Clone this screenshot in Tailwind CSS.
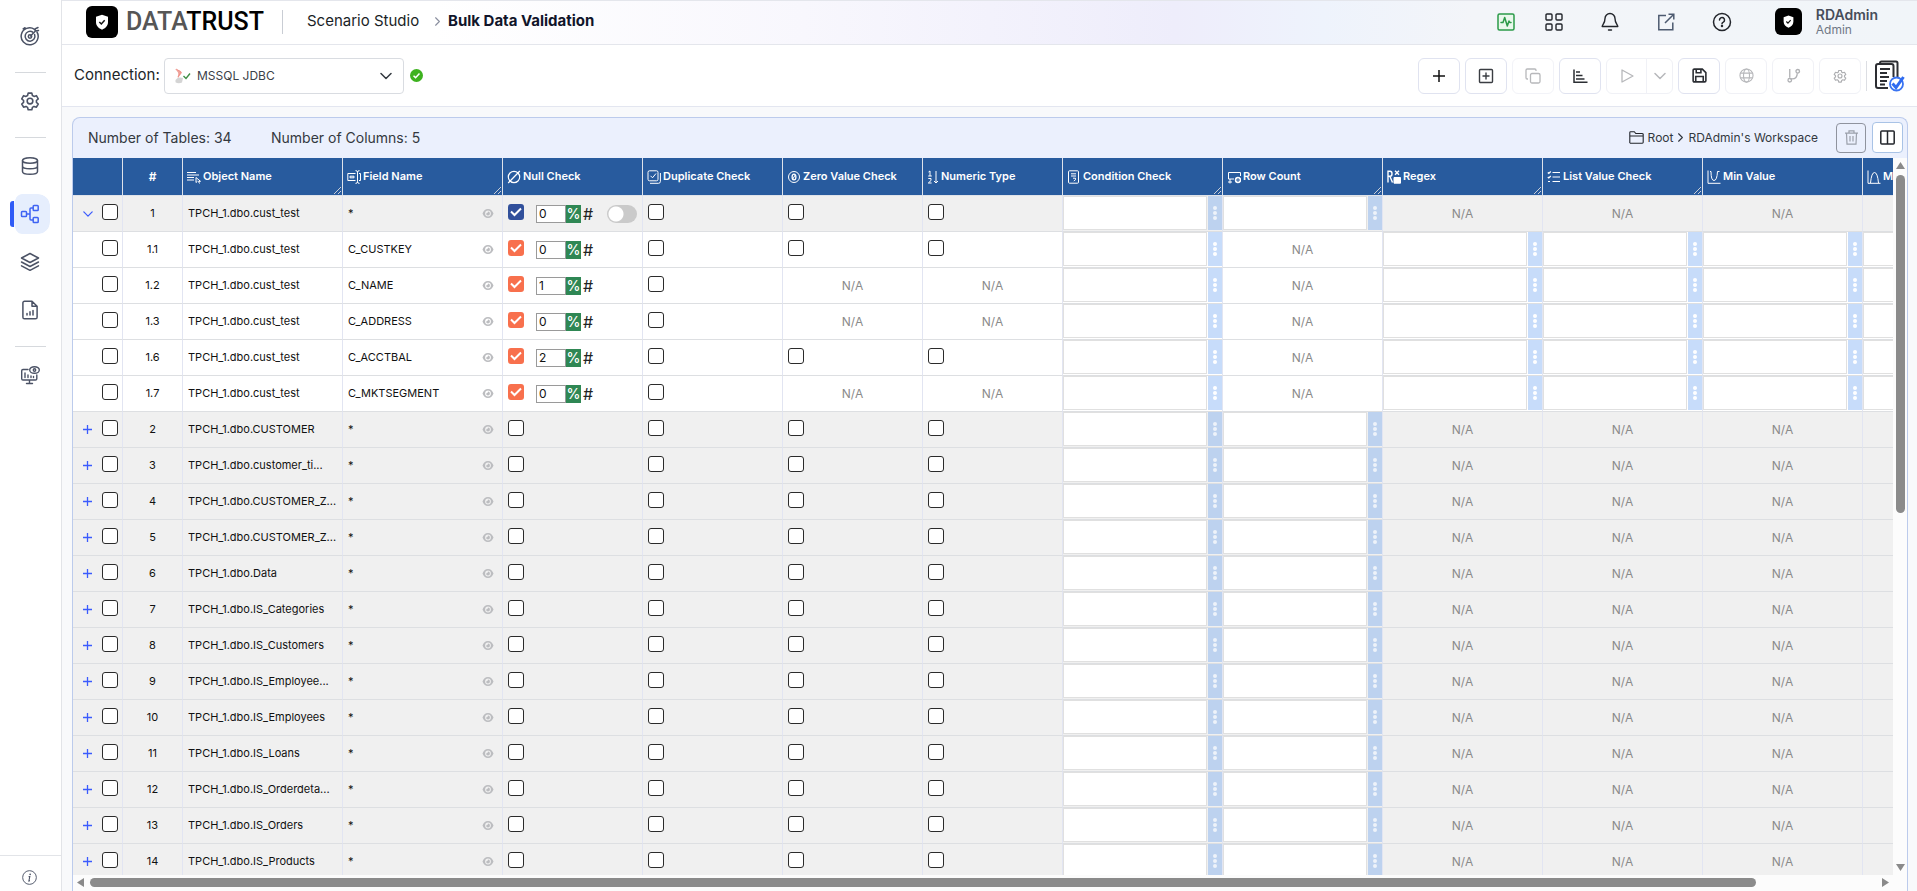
<!DOCTYPE html>
<html lang="en">
<head>
<meta charset="utf-8">
<title>DataTrust - Bulk Data Validation</title>
<meta name="viewport" content="width=device-width, initial-scale=1">
<script src="https://cdn.jsdelivr.net/npm/@tailwindcss/browser@4"></script>
</head>
<body class="h-screen overflow-hidden bg-[#f8f9fb] font-[Inter,sans-serif] text-[#212529]">
<svg class="hidden" aria-hidden="true">
  <defs>
    <symbol id="shield" viewBox="0 0 24 24"><path fill="#fff" d="M12 1l9 3v8c0 6-4 9.500-9 11.500C7 21.500 3 18 3 12V4z"/><path d="M8 12l3 3 5-5.500" fill="none" stroke="#111" stroke-width="2.200"/></symbol>
    <symbol id="eye" viewBox="0 0 24 24"><path fill="currentColor" fill-rule="evenodd" d="M12 2C6 2 2 6.500 0 12c2 5.500 6 10 12 10s10-4.500 12-10c-2-5.500-6-10-12-10zm0 3.700a6.300 6.300 0 1 1 0 12.600 6.300 6.300 0 0 1 0-12.600zm0 2.100c0 2.400-1.600 4-4.200 4.200a4.200 4.200 0 1 0 4.200-4.200z"/></symbol>
    <symbol id="gear" viewBox="0 0 24 24"><path fill="none" stroke="currentColor" stroke-linejoin="round" d="M9.800 2.500h4.400l.7 2.900 1.900 1.100 2.900-.9 2.200 3.800-2.200 2v2.200l2.200 2-2.200 3.800-2.900-.9-1.900 1.100-.7 2.900H9.800l-.7-2.900-1.900-1.100-2.900.9-2.200-3.800 2.200-2v-2.200l-2.200-2 2.200-3.800 2.900.9 1.900-1.100z"/><circle cx="12" cy="12" r="3.400" fill="none" stroke="currentColor"/></symbol>
    <symbol id="chev" viewBox="0 0 12 12"><path d="M1 3.500l5 5 5-5" fill="none" stroke="currentColor" stroke-width="1.500" stroke-linecap="round" stroke-linejoin="round"/></symbol>
  </defs>
</svg>
<div class="flex h-full">

  <!-- Sidebar -->
  <nav aria-label="Main" class="flex w-[62px] shrink-0 flex-col items-center border-r border-[#e2e4e8] bg-white text-[#4b5265]">
    <a href="#" aria-label="Dashboard" class="mt-[26px] mr-[2px] size-5"><svg viewBox="0 0 20 20" fill="none" stroke="currentColor" stroke-width="1.500" stroke-linecap="round"><path d="M14.500 3.300A8.500 8.500 0 1 0 17 6M3.200 2.800L5 1.700"/><path d="M12.800 6.200A4.900 4.900 0 1 0 14.600 8.500"/><circle cx="10" cy="10.500" r="1.700"/><path d="M10.500 10l5-5M15 5l.3-2.300L18 1.500M15 5l3.500-.5"/></svg></a>
    <span class="mt-[26px] h-px w-[31px] bg-[#d6d9dd]"></span>
    <a href="#" aria-label="Settings" class="mt-[18px] mr-[2px] size-5"><svg viewBox="0 0 24 24" stroke-width="1.900"><use href="#gear"/></svg></a>
    <span class="mt-[26px] h-px w-[31px] bg-[#d6d9dd]"></span>
    <a href="#" aria-label="Databases" class="mt-[18px] mr-[2px] size-5"><svg viewBox="0 0 20 20" fill="none" stroke="currentColor" stroke-width="1.500"><ellipse cx="10" cy="4.500" rx="7.500" ry="2.800"/><path d="M2.500 4.500v11c0 1.600 3.300 2.800 7.500 2.800s7.500-1.200 7.500-2.800v-11M2.500 10c0 1.600 3.300 2.800 7.500 2.800s7.500-1.200 7.500-2.800"/></svg></a>
    <div class="mt-[18px] flex w-full items-center pl-[10px]">
      <span class="h-[26px] w-1 rounded-l-[3px] bg-[#2f5bf6]"></span>
      <a href="#" aria-label="Scenario Studio" aria-current="page" class="-ml-1 flex h-10 w-10 items-center justify-center rounded-xl border-l-4 border-[#2f5bf6]/0 bg-[#e6eefd] bg-clip-padding text-[#3f63f3]"><svg class="mr-1 size-5" viewBox="0 0 20 20" fill="none" stroke="currentColor" stroke-width="1.500"><rect x="1.500" y="7.500" width="5" height="5" rx=".8"/><rect x="13.200" y="1.500" width="5" height="5" rx=".8"/><rect x="13.200" y="13.500" width="5" height="5" rx=".8"/><path d="M6.500 10H10M13.200 4H11q-1 0-1 1v10q0 1 1 1h2.200"/></svg></a>
    </div>
    <a href="#" aria-label="Layers" class="mt-[18px] mr-[2px] size-5"><svg viewBox="0 0 20 20" fill="none" stroke="currentColor" stroke-width="1.500" stroke-linejoin="round" stroke-linecap="round"><path d="M10 1.500l8.500 4.500-8.500 4.500L1.500 6zM1.500 10l8.500 4.500 8.500-4.500M1.500 13.800l8.500 4.500 8.500-4.500"/></svg></a>
    <a href="#" aria-label="Reports" class="mt-[28px] mr-[2px] size-5"><svg viewBox="0 0 20 20" fill="none" stroke="currentColor" stroke-width="1.500" stroke-linejoin="round" stroke-linecap="round"><path d="M12 1.200H4.500a1.600 1.600 0 0 0-1.600 1.600v14.400a1.600 1.600 0 0 0 1.600 1.600h11a1.600 1.600 0 0 0 1.600-1.600V6.200zM12 1.200v5h5.100M7 15v-1.500M10 15v-3.300M13 15v-4.500"/></svg></a>
    <span class="mt-[26px] h-px w-[31px] bg-[#d6d9dd]"></span>
    <a href="#" aria-label="Monitoring" class="mt-[18px] mr-[2px] size-5"><svg viewBox="0 0 20 20" fill="none" stroke="currentColor" stroke-width="1.400" stroke-linecap="round"><path d="M8 4.500H3A1.300 1.300 0 0 0 1.700 5.800v7.900A1.300 1.300 0 0 0 3 15h12.500a1.300 1.300 0 0 0 1.300-1.300V10M9.500 15v3.500M6.500 18.500h6M5 8v4.500M8 10v2.500M11 11v1.500M13.500 11.500v1"/><ellipse cx="14.500" cy="5" rx="4.800" ry="3.300"/><circle cx="14.500" cy="5" r="1.200"/></svg></a>
    <div class="mt-auto flex h-9 w-full items-center justify-center border-t border-[#e2e4e8] pt-2">
      <a href="#" aria-label="About" class="mr-[2px] size-[15px]"><svg viewBox="0 0 16 16"><circle cx="8" cy="8" r="7.300" fill="none" stroke="currentColor"/><circle cx="8.700" cy="4.500" r=".9" fill="currentColor"/><path d="M7 7.200l1.400-.3L7.300 11.800l1.200-.3" fill="none" stroke="currentColor" stroke-width="1.100"/></svg></a>
    </div>
  </nav>

  <div class="flex min-w-0 flex-1 flex-col">
    <!-- Header -->
    <header class="flex h-[45px] shrink-0 items-center border-y border-[#e4e6ec] bg-[linear-gradient(90deg,#fff_20%,#f8f7fd_40%,#eeedfb_60%,#eef3fc_68%,#f3f5f9_76%,#f1f5f9_100%)] pr-[39px] pb-[2px] pl-6">
      <div class="flex items-center">
        <span class="flex size-8 items-center justify-center rounded-md bg-black"><svg class="size-4"><use href="#shield"/></svg></span>
        <span class="ml-2 w-[150px] font-[Roboto,sans-serif] text-[25px] leading-8 font-medium whitespace-nowrap text-black"><span class="text-[#565656]">DATA</span>TRUST</span>
      </div>
      <span class="ml-[6px] h-6 w-px bg-[#c9cdd4]"></span>
      <nav aria-label="Breadcrumb" class="ml-6 flex items-center text-[15px] whitespace-nowrap">
        <a href="#" class="w-[126px] text-[#1b1f27]">Scenario Studio</a>
        <svg class="mr-[6px] size-[9px] -rotate-90 text-[#8b90a0]"><use href="#chev"/></svg>
        <span class="font-bold text-[#11152a]">Bulk Data Validation</span>
      </nav>
      <div class="ml-auto flex items-center text-[#22252b]">
        <button aria-label="Activity" class="mr-7 size-5 text-[#2b9a48]"><svg viewBox="0 0 20 20" fill="none" stroke="currentColor" stroke-width="1.500" stroke-linejoin="round" stroke-linecap="round"><rect x="2" y="2" width="16" height="16" rx="1.500" fill="#e9f8ec"/><path d="M5 10.500h2l1.700-5 2.600 8.500 1.700-5 .8 1.500H15"/></svg></button>
        <button aria-label="Apps" class="mr-9 size-5"><svg viewBox="0 0 20 20" fill="none" stroke="currentColor" stroke-width="1.400"><rect x="2" y="2" width="6" height="6" rx="1"/><rect x="12" y="2" width="6" height="6" rx="1"/><rect x="2" y="12" width="6" height="6" rx="1"/><rect x="12" y="12" width="6" height="6" rx="1"/></svg></button>
        <button aria-label="Notifications" class="mr-9 size-5"><svg viewBox="0 0 20 20" fill="none" stroke="currentColor" stroke-width="1.400" stroke-linejoin="round" stroke-linecap="round"><path d="M10 1.500A5 5 0 0 0 5 6.500C5 11.500 2.200 12.500 2.200 14.500h15.600C17.800 12.500 15 11.500 15 6.500a5 5 0 0 0-5-5zM8.500 18h3"/></svg></button>
        <button aria-label="Open in new window" class="mr-9 size-5 text-[#4d5a70]"><svg viewBox="0 0 20 20" fill="none" stroke="currentColor" stroke-width="1.500"><path d="M10 3.500H2.800v14.300h14V10.500M12.500 2.200h5.300v5.300M17.800 2.200L9 11"/></svg></button>
        <button aria-label="Help" class="mr-[43px] size-5"><svg viewBox="0 0 20 20" fill="none" stroke="currentColor" stroke-width="1.500" stroke-linecap="round"><circle cx="10" cy="10" r="8.500"/><path d="M7.500 8a2.500 2.500 0 1 1 3.800 2.100c-.9.500-1.300.8-1.300 1.600"/><circle cx="10" cy="14" r=".5" fill="currentColor"/></svg></button>
        <span class="flex size-[27px] items-center justify-center rounded-md bg-black"><svg class="size-[13px]"><use href="#shield"/></svg></span>
        <div class="ml-[14px] whitespace-nowrap">
          <div class="text-sm leading-[17px] font-semibold text-[#474d5a]">RDAdmin</div>
          <div class="text-xs leading-[14px] text-[#6f7785]">Admin</div>
        </div>
      </div>
    </header>

    <!-- Toolbar -->
    <div class="flex h-[62px] shrink-0 items-center border-b border-[#e3e6f0] bg-white pr-3 pl-3">
      <label for="conn" class="w-[90px] text-[15px]">Connection:</label>
      <div class="relative">
        <select id="conn" class="h-9 w-60 appearance-none rounded border border-[#d9dce1] bg-white pl-8 text-xs text-[#3c4148]"><option>MSSQL JDBC</option></select>
        <svg class="pointer-events-none absolute top-[10px] left-[10px] h-4 w-[17px]" viewBox="0 0 17 16"><path d="M1 1c3 .5 5 1 7 3.500-1 2-3 3.500-4 6-1-2 1-4 0-6C3 3 2 2 1 1z" fill="#f0a49c"/><path d="M1.500 12c2-3 5-3 7.500-2l-1 4.500c-2 1-5 1-6.500-.2z" fill="#d4d4d4"/><path d="M2 1l5 3-3 5" stroke="#ee8f86" fill="none" stroke-width=".8"/><path d="M9.500 8l2.500 2.500L16 5.500" fill="none" stroke="#3f8f45" stroke-width="1.400"/></svg>
        <svg class="pointer-events-none absolute top-3 right-3 size-3 text-[#343a40]"><use href="#chev"/></svg>
      </div>
      <svg class="ml-[6px] size-[13px]" viewBox="0 0 14 14" role="img" aria-label="Connected"><circle cx="7" cy="7" r="7" fill="#3db21f"/><path d="M3.800 7.200L6 9.300l4.200-4.500" fill="none" stroke="#fff" stroke-width="1.600"/></svg>

      <div class="ml-auto flex items-center gap-[5px] text-[#2b2e33]">
        <button aria-label="Add" class="flex h-9 w-[42px] items-center justify-center rounded-md border border-[#e0e3f0]"><svg class="size-3" viewBox="0 0 12 12" stroke="#111" stroke-width="1.500"><path d="M6 0v12M0 6h12"/></svg></button>
        <button aria-label="Add box" class="flex h-9 w-[42px] items-center justify-center rounded-md border border-[#e0e3f0]"><svg class="size-4" viewBox="0 0 16 16" fill="none" stroke="#3a3d42" stroke-width="1.400"><rect x="1.500" y="1.500" width="13" height="13" rx="1"/><path d="M8 4.500v7M4.500 8h7"/></svg></button>
        <button disabled aria-label="Copy" class="flex h-9 w-[42px] items-center justify-center rounded-md border border-[#f2f3f8] text-[#b7b8bb]"><svg class="size-4" viewBox="0 0 16 16" fill="none" stroke="currentColor" stroke-width="1.300"><rect x="5.500" y="5.500" width="9.500" height="9.500" rx="1.500"/><path d="M3 11H2.200A1.200 1.200 0 0 1 1 9.800V2.200A1.200 1.200 0 0 1 2.200 1h7.600A1.200 1.200 0 0 1 11 2.200V3"/></svg></button>
        <button aria-label="Profile chart" class="flex h-9 w-[42px] items-center justify-center rounded-md border border-[#e0e3f0]"><svg class="size-4" viewBox="0 0 16 16" fill="none" stroke="currentColor" stroke-width="1.500"><path d="M2 1.500v12.700h13.500M4 4h4M4 7.500h6.500M4 11h8.500"/></svg></button>
        <div class="flex h-9 w-[67px] rounded-md border border-[#f0f1f6] text-[#b7b8bb]">
          <button disabled aria-label="Run" class="flex flex-1 items-center justify-center border-r border-[#f0f1f6]"><svg class="size-[14px]" viewBox="0 0 14 14" fill="none" stroke="currentColor" stroke-width="1.300" stroke-linejoin="round"><path d="M2 1l11 6-11 6z"/></svg></button>
          <button disabled aria-label="Run options" class="flex w-[25px] items-center justify-center"><svg class="size-3"><use href="#chev"/></svg></button>
        </div>
        <button aria-label="Save" class="flex h-9 w-[42px] items-center justify-center rounded-md border border-[#e0e3f0]"><svg class="size-[15px]" viewBox="0 0 16 16" fill="none" stroke="currentColor" stroke-width="1.700"><path d="M2.500 1.200H11l3.800 3.800v8.500q0 1.300-1.300 1.300h-11q-1.300 0-1.300-1.300v-11q0-1.300 1.300-1.300zM4.500 1.500v3.500h5V1.500M4 14.500V9h8v5.500"/></svg></button>
        <button disabled aria-label="Web" class="flex h-9 w-[42px] items-center justify-center rounded-md border border-[#f0f1f6] text-[#b7b8bb]"><svg class="size-[15px]" viewBox="0 0 16 16" fill="none" stroke="currentColor" stroke-width="1.200"><circle cx="8" cy="8" r="7"/><ellipse cx="8" cy="8" rx="3.200" ry="7"/><path d="M1.500 5.500h13M1.500 10.500h13"/></svg></button>
        <button disabled aria-label="Branch" class="flex h-9 w-[42px] items-center justify-center rounded-md border border-[#f0f1f6] text-[#b0b1b4]"><svg class="size-[15px]" viewBox="0 0 16 16" fill="none" stroke="currentColor" stroke-width="1.400"><path d="M4 1v9.500M4 11.500h2.500q5.500 0 5.500-6"/><circle cx="4" cy="13" r="1.900"/><circle cx="12.500" cy="3.500" r="1.900"/></svg></button>
        <button disabled aria-label="Options" class="flex h-9 w-[42px] items-center justify-center rounded-md border border-[#f0f1f6] text-[#adaeb1]"><svg class="size-[14px]" viewBox="0 0 24 24" stroke-width="2"><use href="#gear"/></svg></button>
        <span class="h-[30px] w-px bg-[#dcdee3]"></span>
        <button aria-label="Validation report" class="ml-[2px] h-8 w-[31px]"><svg viewBox="0 0 31 32" fill="none" stroke="#2d2e33" stroke-width="2"><path d="M6 4V3q0-1.500 1.500-1.500H22q1.500 0 1.500 1.500v18"/><path d="M14 28H4q-2 0-2-2V6q0-2 2-2h13.500q2 0 2 2v11"/><path d="M6 9h10M6 13h7M6 17h9M6 21h7M6 24.500h5" /><circle cx="22.500" cy="24" r="6.500" stroke="#3a74f2" stroke-width="1.800" fill="#fff"/><path d="M18.500 23.500l3.500 4L29.500 17" stroke="#2f6bf0" stroke-width="3"/></svg></button>
      </div>
    </div>

    <!-- Grid panel -->
    <main class="mt-[10px] mr-[9px] ml-[10px] flex min-h-0 flex-1 flex-col rounded-t-lg border-x border-t border-[#bccbec] bg-[#ebf0fd]">
      <div class="flex h-10 shrink-0 items-center pr-1 pb-px pl-[15px] text-[#333840]">
        <span class="w-[183px] text-sm">Number of Tables: 34</span>
        <span class="text-sm">Number of Columns: 5</span>
        <div class="ml-auto flex items-center text-[12px]">
          <svg class="mr-1 h-[13px] w-[15px]" viewBox="0 0 15 13" fill="none" stroke="#22252b" stroke-width="1.100"><path d="M.8 12V1.500q0-.8.8-.8h3.700l1.500 1.800h6q1.400 0 1.400.800v8q0 .9-.9.900H.8M.8 5h13.400"/></svg>
          <a href="#">Root</a>
          <svg class="mx-[3px] size-[9px] -rotate-90"><use href="#chev"/></svg>
          <a href="#" class="mr-[18px]">RDAdmin's Workspace</a>
          <button disabled aria-label="Delete" class="mr-[6px] flex size-[30px] items-center justify-center rounded border border-[#8f939e] text-[#9ba0ab]"><svg class="h-[15px] w-[13px]" viewBox="0 0 13 15" fill="none" stroke="currentColor" stroke-width="1.200"><path d="M0 3.200h13M4 3V.8h5V3M1.500 3.200l.5 11h9l.5-11M5 6v5.500M8 6v5.500"/></svg></button>
          <button aria-label="Choose columns" class="flex size-[31px] items-center justify-center rounded border border-[#a9c3e6] bg-white"><svg class="size-[15px]" viewBox="0 0 15 15" fill="none" stroke="#22252b" stroke-width="1.500"><rect x=".8" y="1" width="13.400" height="13" rx="1"/><path d="M7.500 1v13"/></svg></button>
        </div>
      </div>

      <div class="flex min-h-0 flex-1 bg-[#fcfcfc]">
        <div class="flex min-w-0 flex-1 flex-col">
          <div class="min-h-0 flex-1 overflow-hidden">
            <table class="w-[1950px] table-fixed border-separate border-spacing-0 text-xs text-[#111]">
              <colgroup><col class="w-[50px]"><col class="w-[60px]"><col class="w-40"><col class="w-40"><col class="w-[140px]"><col class="w-[140px]"><col class="w-[140px]"><col class="w-[140px]"><col class="w-40"><col class="w-40"><col class="w-40"><col class="w-40"><col class="w-40"><col class="w-40"></colgroup>
              <thead id="head"></thead>
              <tbody id="body"></tbody>
            </table>
          </div>
          <div class="flex h-4 shrink-0 items-start gap-[6px] px-1 pt-[3px]" aria-hidden="true">
            <svg class="h-[9px] w-[7px]" viewBox="0 0 7 9" fill="#8a8a8a"><path d="M7 0v9L0 4.500z"/></svg>
            <div class="flex flex-1 pr-[120px]"><span class="h-[9px] flex-1 rounded-full bg-[#8b8b8b]"></span></div>
            <svg class="h-[9px] w-[7px]" viewBox="0 0 7 9" fill="#8a8a8a"><path d="M0 0v9l7-4.500z"/></svg>
          </div>
        </div>
        <div class="flex w-[14px] shrink-0 flex-col items-center pt-1 pb-[20px]" aria-hidden="true">
          <svg class="h-[7px] w-[9px] shrink-0" viewBox="0 0 9 7" fill="#8a8a8a"><path d="M0 7h9L4.500 0z"/></svg>
          <div class="flex w-[9px] flex-1 flex-col pt-[6px]"><span class="h-[49%] w-full rounded-full bg-[#8b8b8b]"></span></div>
          <svg class="h-[7px] w-[9px] shrink-0" viewBox="0 0 9 7" fill="#8a8a8a"><path d="M0 0h9L4.500 7z"/></svg>
        </div>
      </div>
    </main>
  </div>
</div>

<script>
const svg = (body, w = 14) => `<svg class="h-[14px] shrink-0" width="${w}" viewBox="0 0 ${w} 14" fill="none" stroke="currentColor">${body}</svg>`;
const columns = [
  ['Object Name', svg('<path d="M0 2.500h9M0 5h12M0 7.500h7M0 10h7" stroke-width="1.200"/><path d="M9 7.500l4.500 3.800-2 .2 1 2M9 7.500v5l1.500-1.300"/>'), true],
  ['Field Name', svg('<path d="M8.500 3.500H.8v7h7.700M12 3.500h1.500v7H12M3 6.200h4v1.600H3z"/><path d="M8.500.6q2 0 2 1.500v9.800q0 1.500-2 1.500M12.500.6q-2 0-2 1.500M12.500 13.400q-2 0-2-1.500"/>'), true],
  ['Null Check', svg('<circle cx="7" cy="7" r="5.700" stroke-width="1.200"/><path d="M1.200 13L12.800 1" stroke-width="1.200"/>'), false],
  ['Duplicate Check', svg('<rect x="1" y=".8" width="10" height="10" rx="1.500"/><path d="M3 13.300h8.500q1.900 0 1.900-1.900V3M3.500 5.800l2 2L9 3.500"/>'), false],
  ['Zero Value Check', svg('<circle cx="7" cy="7" r="5.500"/><ellipse cx="7" cy="7" rx="1.900" ry="2.900" stroke-width="1.300"/><path d="M5.800 9l2.400-4"/>'), false],
  ['Numeric Type', svg('<path d="M1.500 2l1.500-1v5M1.200 6h3.600M1.300 8.500h2.700v2L1.300 13h3.300M9 1v12M7 11l2 2 2-2"/>', 12), false],
  ['Condition Check', svg('<rect x="1.500" y=".8" width="10" height="12.400" rx="1"/><path d="M4 3.800h5M4 6h5M6 8.200h2.500v1.500L6.800 11"/>'), true],
  ['Row Count', svg('<path d="M7 9H1.500V2.500h12V6M1 12h4M3 9v4.500"/><circle cx="11" cy="10" r="3.200" fill="#fff" stroke="none"/><path d="M11 8v4M9 10h4" stroke="#285b9e"/>'), true],
  ['Regex', svg('<path d="M1 12.500V1.200h2q2 0 2 2.500t-2 2.600H1M3 6.500l2.500 6M8 .8l4 4M12 .8l-4 4" stroke-width="1.400"/><path d="M7 7.500h6.500v5.700H7z" fill="#fff"/>'), true],
  ['List Value Check', svg('<path d="M5.500 2.500H13M5.500 7H13M5.500 11.500H13M.8 2.500l1 1 2-2M.8 7l1 1 2-2M1 11.500h2" stroke-width="1.200"/>'), true],
  ['Min Value', svg('<path d="M1 .5v12.800h12.500M3 1.500h1q0 9 3 9t3.500-9h2"/>'), false],
  ['Max Value', svg('<path d="M1 .5v12.800h12.500M3.500 13q1-10.500 4-10.500t4 10.500"/>'), true]
];
const th = 'relative h-[38px] border-r border-b border-[#dfe3ea] bg-[#285b9e] p-0 text-left font-semibold text-white';
const grip = '<svg class="absolute right-[1px] bottom-[1px] size-2" viewBox="0 0 8 8" fill="none" stroke="#c8cdd6"><path d="M1 8l7-7M5 8l3-3"/></svg>';
document.getElementById('head').innerHTML =
  `<tr><th class="${th}"></th><th class="${th}"><div class="text-center">#</div></th>` +
  columns.map(([name, icon, resize]) => `<th class="${th}"><div class="flex items-center gap-[2px] overflow-hidden pl-1 text-[11px] whitespace-nowrap">${icon}${name}</div>${resize ? grip : ''}</th>`).join('') + '</tr>';

const rows = [
  ['1', 'cust_test', '*', 'parent', '0'],
  ['1.1', 'cust_test', 'C_CUSTKEY', 'num', '0'],
  ['1.2', 'cust_test', 'C_NAME', 'text', '1'],
  ['1.3', 'cust_test', 'C_ADDRESS', 'text', '0'],
  ['1.6', 'cust_test', 'C_ACCTBAL', 'num', '2'],
  ['1.7', 'cust_test', 'C_MKTSEGMENT', 'text', '0'],
  ...['CUSTOMER', 'customer_ti...', 'CUSTOMER_Z...', 'CUSTOMER_Z...', 'Data', 'IS_Categories', 'IS_Customers', 'IS_Employee...', 'IS_Employees', 'IS_Loans', 'IS_Orderdeta...', 'IS_Orders', 'IS_Products'].map((n, i) => [String(i + 2), n, '*', 'table', null])
];
const na = '<div class="text-center text-[#8a8a8a]">N/A</div>';
const box = label => `<input type="checkbox" aria-label="${label}" class="mb-[3px] block size-4 appearance-none rounded-[3px] border border-[#2b2b2b] bg-white">`;
const ticked = (label, color) => `<span class="relative mb-[3px] block size-4"><input type="checkbox" checked aria-label="${label}" class="block size-4 appearance-none rounded-[3px] ${color}"><svg class="pointer-events-none absolute inset-0" viewBox="0 0 16 16" fill="none" stroke="#fff" stroke-width="2"><path d="M3 7.500l3.500 3.500L13 4.500"/></svg></span>`;
const cell = (html, extra = '') => `<td class="h-9 border-r border-b border-r-[#e2e5f2] border-b-[#dddfe2] p-0 ${extra}">${html}</td>`;
const editor = (label, top) => `<div class="flex h-[34px] gap-px"><input type="text" aria-label="${label}" class="min-w-0 flex-1 border border-[#e0e0e0] bg-white px-2"><button aria-label="${label} options" class="flex w-[14px] items-center justify-center ${top ? 'bg-[#bdd2ef] text-[#eef3fa]' : 'bg-[#c7dcfa] text-white'}"><svg class="h-[14px] w-1" viewBox="0 0 4 14" fill="currentColor"><circle cx="2" cy="2" r="2"/><circle cx="2" cy="7" r="2"/><circle cx="2" cy="12" r="2"/></svg></button></div>`;

document.getElementById('body').innerHTML = rows.map(([n, name, field, kind, pct]) => {
  const top = kind === 'parent' || kind === 'table';
  const numeric = kind !== 'text';
  const toggle = kind === 'parent'
    ? `<button aria-label="Collapse row ${n}" class="block text-[#3b5bfd]"><svg class="size-[10px]"><use href="#chev"/></svg></button>`
    : kind === 'table' ? `<button aria-label="Expand row ${n}" class="block"><svg class="size-[9px]" viewBox="0 0 9 9" stroke="#3b5bfd" stroke-width="1.300"><path d="M4.500 0v9M0 4.500h9"/></svg></button>` : '';
  const nullCell = pct === null ? box(`Null check ${n}`) :
    `<div class="flex items-center">${ticked(`Null check ${n}`, top ? 'bg-[#31509b]' : 'bg-[#f8704d]')}<input type="text" value="${pct}" aria-label="Threshold ${n}" class="ml-3 h-[18px] w-[30px] border border-[#9a9a9a] bg-white px-[2px] text-xs"><button class="h-[18px] w-[15px] bg-[#2f8754] text-sm leading-[18px] font-medium text-white">%</button><button class="ml-[2px] text-base leading-[18px] text-[#222]">#</button>${top ? `<input type="checkbox" role="switch" aria-label="Threshold mode" class="mr-[5px] ml-auto h-[18px] w-[30px] appearance-none rounded-full bg-[#cacaca] bg-[radial-gradient(circle_at_9px_9px,#fff_7px,transparent_8px)]">` : ''}</div>`;
  return `<tr class="${top ? 'bg-[#f0f0f0]' : 'bg-white'}">` +
    cell(`<div class="flex items-center justify-between pr-1 pl-[10px]"><span class="w-[11px]">${toggle}</span>${box(`Select row ${n}`)}</div>`) +
    cell(n, 'text-center text-[11px]') +
    cell(`<div class="overflow-hidden pl-[5px] text-[11px] whitespace-nowrap">TPCH_1.dbo.${name}</div>`) +
    cell(`<div class="flex items-center justify-between pr-[7px] pl-[5px] text-[11px]">${field}<button aria-label="Preview ${n}" class="text-[#bcbdc0]"><svg class="block h-[11px] w-[14px]" preserveAspectRatio="none"><use href="#eye"/></svg></button></div>`) +
    cell(nullCell, 'pl-[5px]') +
    cell(box(`Duplicate check ${n}`), 'pl-[5px]') +
    (numeric ? cell(box(`Zero value check ${n}`), 'pl-[5px]') + cell(box(`Numeric type ${n}`), 'pl-[5px]') : cell(na) + cell(na)) +
    cell(editor('Condition check', top), 'align-top') +
    (top ? cell(editor('Row count', top), 'align-top') : cell(na)) +
    ['Regex', 'List value', 'Min value', 'Max value'].map(l => top ? cell(na) : cell(editor(l, top), 'align-top')).join('') +
    '</tr>';
}).join('');
</script>
</body>
</html>
